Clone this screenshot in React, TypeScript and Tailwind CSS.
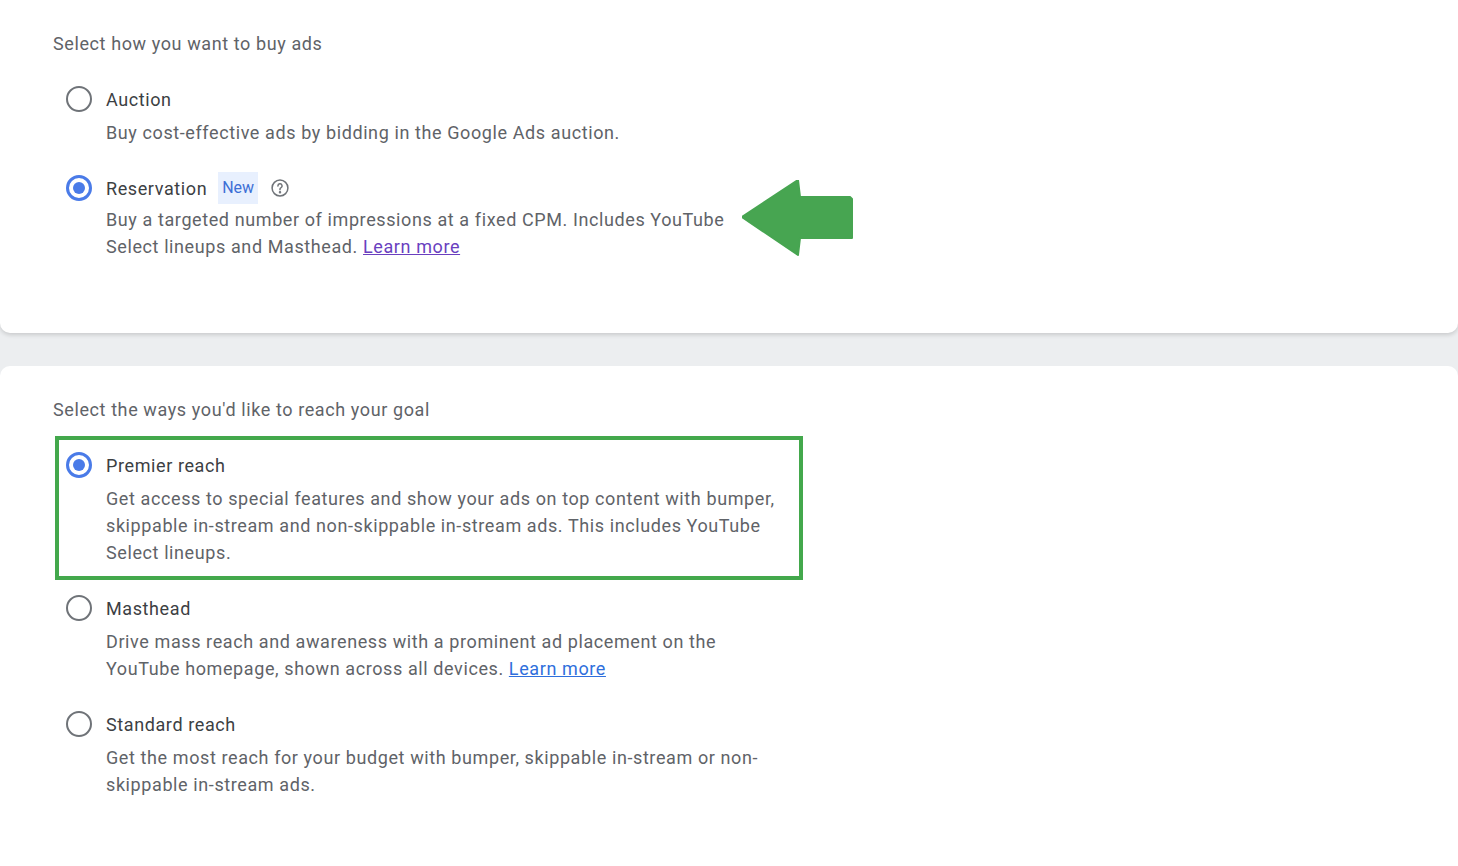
import React from "react";

function Radio({ checked }: { checked?: boolean }) {
  return checked ? (
    <div className="w-[26px] h-[26px] rounded-full border-[3px] border-[#4a7be8] flex items-center justify-center shrink-0">
      <div className="w-[12px] h-[12px] rounded-full bg-[#4a7be8]" />
    </div>
  ) : (
    <div className="w-[26px] h-[26px] rounded-full border-[2.5px] border-[#6f7378] shrink-0" />
  );
}

function Option({
  checked,
  title,
  extra,
  children,
}: {
  checked?: boolean;
  title: string;
  extra?: React.ReactNode;
  children: React.ReactNode;
}) {
  return (
    <div className="flex gap-[14px] pl-[13px]">
      <div className="pt-[1px]">
        <Radio checked={checked} />
      </div>
      <div>
        <div className="flex items-center h-[28px] text-[18px] text-[#3c4043]">
          {title}
          {extra}
        </div>
        <div className="mt-[6px] text-[18px] leading-[27px] text-[#5f6368]">{children}</div>
      </div>
    </div>
  );
}

export default function App() {
  return (
    <div
      className="w-[1458px] h-[866px] bg-[#eceef0] overflow-hidden tracking-[0.6px]"
      style={{ fontFamily: "Roboto, 'Liberation Sans', sans-serif" }}
    >
      <div className="relative h-[333px] bg-white rounded-b-[10px] shadow-[0_2px_4px_rgba(0,0,0,0.15)] pl-[53px] pt-[31px]">
        <div className="text-[18px] text-[#5f6368] leading-[26px]">Select how you want to buy ads</div>
        <div className="mt-[28px] flex flex-col gap-[28px]">
          <Option title="Auction">Buy cost-effective ads by bidding in the Google Ads auction.</Option>
          <Option
            checked
            title="Reservation"
            extra={
              <>
                <span className="ml-[11px] px-[4px] h-[32px] flex items-center bg-[#e8f0fe] text-[#3d6fd6] text-[16px] tracking-normal">
                  New
                </span>
                <svg className="ml-[12px]" width="20" height="20" viewBox="0 0 24 24" fill="none" stroke="#6f7378" strokeWidth="1.8">
                  <circle cx="12" cy="12" r="9.5" />
                  <path d="M9.5 9.5a2.5 2.5 0 1 1 3.5 2.3c-.7.3-1 .8-1 1.5v.7" strokeLinecap="round" />
                  <circle cx="12" cy="17" r="0.6" fill="#6f7378" />
                </svg>
              </>
            }
          >
            <div className="-mt-[2px]">
              Buy a targeted number of impressions at a fixed CPM. Includes YouTube
              <br />
              Select lineups and Masthead.{" "}
              <a className="text-[#6a3fbf] underline">Learn more</a>
            </div>
          </Option>
        </div>
        <svg className="absolute left-[742px] top-[180px]" width="111" height="76" viewBox="0 0 111 76">
          <polygon points="0,37 56,0 58,17 108,17 110,19 110,58 58,58 56,75" fill="#47a551" strokeLinejoin="round" stroke="#47a551" strokeWidth="2" />
        </svg>
      </div>
      <div className="mt-[33px] h-[520px] bg-white rounded-t-[10px] pl-[53px] pt-[31px]">
        <div className="text-[18px] text-[#5f6368] leading-[26px]">Select the ways you'd like to reach your goal</div>
        <div className="mt-[13px] ml-[2px] w-[748px] h-[144px] border-[4px] border-[#43a84c] pt-[11px]">
          <div className="-ml-[6px]">
            <Option checked title="Premier reach">
              Get access to special features and show your ads on top content with bumper,
              <br />
              skippable in-stream and non-skippable in-stream ads. This includes YouTube
              <br />
              Select lineups.
            </Option>
          </div>
        </div>
        <div className="mt-[14px] flex flex-col gap-[28px]">
          <Option title="Masthead">
            Drive mass reach and awareness with a prominent ad placement on the
            <br />
            YouTube homepage, shown across all devices.{" "}
            <a className="text-[#2f6fdc] underline">Learn more</a>
          </Option>
          <Option title="Standard reach">
            Get the most reach for your budget with bumper, skippable in-stream or non-
            <br />
            skippable in-stream ads.
          </Option>
        </div>
      </div>
    </div>
  );
}
